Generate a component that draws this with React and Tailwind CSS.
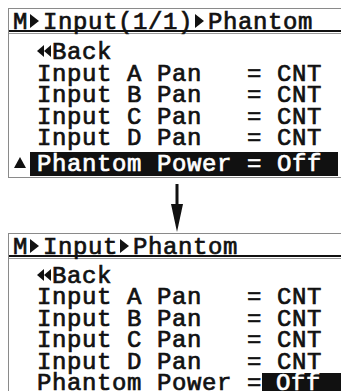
import React from 'react';

const FONT = { fontFamily: '"Liberation Mono", "DejaVu Sans Mono", monospace' };

function RightTri() {
  return (
    <svg width="15" height="16" viewBox="0 0 15 16" className="inline-block align-baseline">
      <polygon points="2,1 11,8 2,15" fill="#111" />
    </svg>
  );
}

function BackTri() {
  return (
    <svg width="15" height="16" viewBox="0 0 15 16" className="inline-block align-baseline">
      <polygon points="7,2 7,14 0,8" fill="#111" />
      <polygon points="14,2 14,14 7,8" fill="#111" />
    </svg>
  );
}

function Row({ children }) {
  return <div className="h-[21.5px] leading-[21px] pl-[28px] whitespace-pre">{children}</div>;
}

function Title({ children }) {
  return (
    <>
      <div className="h-[20px] leading-[21px] pl-[4px] mt-[3px] whitespace-pre border-b-2 border-[#111]">
        {children}
      </div>
      <div className="h-px bg-[#9a9a9a] mt-px" />
    </>
  );
}

function PanRows() {
  return (
    <>
      <Row><BackTri />Back</Row>
      <Row>Input A Pan   = CNT</Row>
      <Row>Input B Pan   = CNT</Row>
      <Row>Input C Pan   = CNT</Row>
      <Row>Input D Pan   = CNT</Row>
    </>
  );
}

export default function App() {
  return (
    <div
      className="w-[341px] h-[391px] bg-white overflow-hidden text-[24px] tracking-[0.6px] text-[#111] [-webkit-text-stroke:0.7px_currentColor]"
      style={FONT}
    >
      {/* before */}
      <div className="ml-[8px] mt-[8px] w-[333px] border-l border-t border-b border-[#8a8a8a]">
        <Title>M<RightTri />Input(1/1)<RightTri />Phantom</Title>
        <div className="mt-[8px]">
          <PanRows />
        </div>
        <div className="flex h-[24px] mt-[2px] mb-[1px]">
          <div className="w-[21px] flex justify-center pt-[5px]">
            <svg width="12" height="11" viewBox="0 0 12 11">
              <polygon points="6,0 12,11 0,11" fill="#111" />
            </svg>
          </div>
          <div className="flex-1 mr-[3px] bg-[#111] text-white pl-[7px] leading-[25px] whitespace-pre">
            Phantom Power = Off
          </div>
        </div>
      </div>

      {/* arrow */}
      <div className="h-[55px]">
        <svg width="341" height="55" viewBox="0 0 341 55">
          <rect x="175.5" y="6" width="3" height="24" fill="#111" />
          <polygon points="171,26 183,26 177,54" fill="#111" />
        </svg>
      </div>

      {/* after */}
      <div className="ml-[8px] w-[333px] border-l border-t border-[#8a8a8a]">
        <Title>M<RightTri />Input<RightTri />Phantom</Title>
        <div className="mt-[7px]">
          <PanRows />
          <div className="flex h-[21.5px] leading-[21px]">
            <div className="pl-[28px] whitespace-pre">Phantom Power =</div>
            <div className="flex-1 bg-[#111] text-white pl-[14px] whitespace-pre">Off</div>
          </div>
        </div>
      </div>
    </div>
  );
}
